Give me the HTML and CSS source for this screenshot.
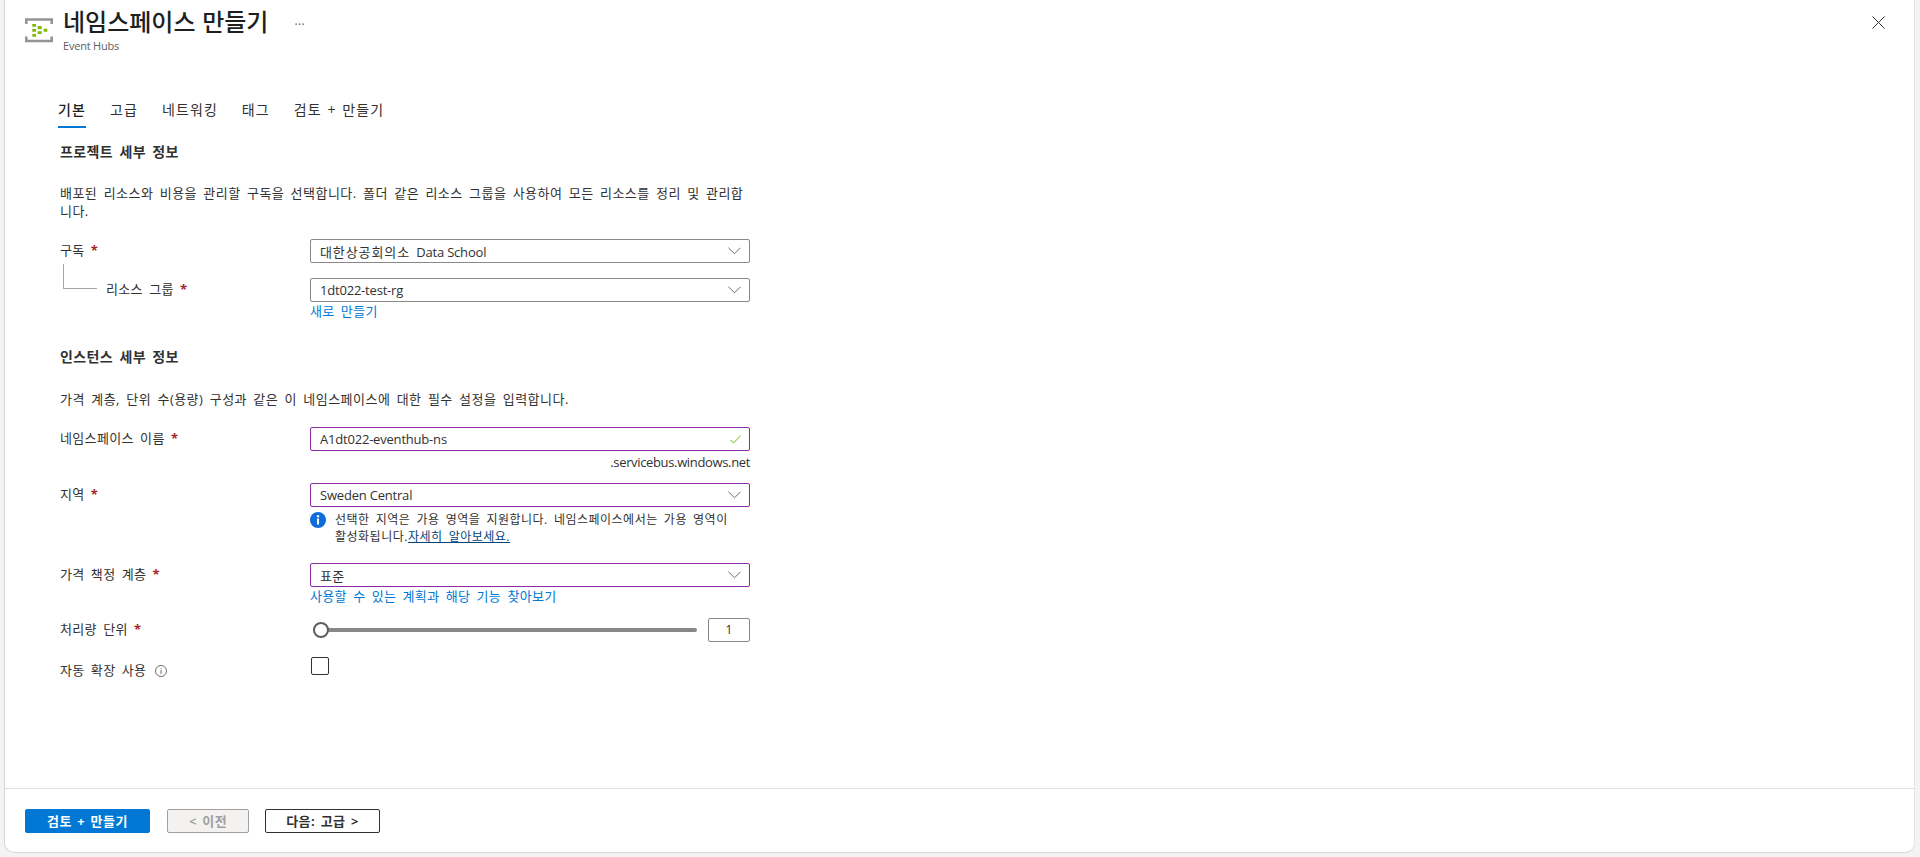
FILE: index.html
```html
<!DOCTYPE html>
<html lang="ko">
<head>
<meta charset="utf-8">
<title>네임스페이스 만들기</title>
<link rel="stylesheet" href="styles.css">
</head>
<body>
<div class="panel">
  <header class="header">
    <svg class="hub-icon" viewBox="0 0 28 25" width="28" height="25">
      <path d="M1.300 6V1.500h25.400V6M1.300 18.500v4.500h25.400v-4.500" fill="none" stroke="#949494" stroke-width="2.600"/>
      <path d="M7.300 6H11v2.700H7.300zM7.300 11H11v2.700H7.300zM7.300 16H11v2.700H7.300zM12.700 8h4v3.300h-4zM12.700 13.300h4V16h-4zM18.700 10.700h3.600v3h-3.600z" fill="#7fba00"/>
    </svg>
    <div class="titles">
      <h1 class="title">네임스페이스 만들기</h1>
      <div class="subtitle latin">Event Hubs</div>
    </div>
    <span class="more">···</span>
    <svg class="close" viewBox="0 0 13 13" width="13" height="13"><path d="M.5.500l12 12M12.500.500l-12 12" stroke="#323130" stroke-width="1" fill="none"/></svg>
  </header>

  <nav class="tabs">
    <span class="tab active">기본</span>
    <span class="tab">고급</span>
    <span class="tab">네트워킹</span>
    <span class="tab">태그</span>
    <span class="tab">검토 + 만들기</span>
  </nav>

  <main class="form">
    <h2 class="section">프로젝트 세부 정보</h2>
    <p class="desc">배포된 리소스와 비용을 관리할 구독을 선택합니다. 폴더 같은 리소스 그룹을 사용하여 모든 리소스를 정리 및 관리합니다.</p>

    <div class="row row-sub">
      <label class="label">구독 <span class="req">*</span></label>
      <div class="control"><div class="select"><span><span class="wide">대한상공회의소</span> <span class="latin">Data School</span></span><svg class="chev" viewBox="0 0 14 8" width="13" height="8"><path d="M.5.500L7 7l6.500-6.500" fill="none" stroke="#605e5c"/></svg></div></div>
    </div>
    <div class="row row-rg">
      <label class="label label-child">리소스 그룹 <span class="req">*</span></label>
      <div class="control">
        <div class="select"><span class="latin">1dt022-test-rg</span><svg class="chev" viewBox="0 0 14 8" width="13" height="8"><path d="M.5.500L7 7l6.500-6.500" fill="none" stroke="#605e5c"/></svg></div>
        <a class="link">새로 만들기</a>
      </div>
    </div>

    <h2 class="section section-2">인스턴스 세부 정보</h2>
    <p class="desc desc-2">가격 계층, 단위 수(용량) 구성과 같은 이 네임스페이스에 대한 필수 설정을 입력합니다.</p>

    <div class="row row-ns">
      <label class="label">네임스페이스 이름 <span class="req">*</span></label>
      <div class="control">
        <div class="select dirty"><span class="latin">A1dt022-eventhub-ns</span><svg class="check" viewBox="0 0 14 11" width="11" height="9"><path d="M.5 6l4 4L13.500.500" fill="none" stroke="#6bb700" stroke-width="1.200"/></svg></div>
        <div class="suffix latin">.servicebus.windows.net</div>
      </div>
    </div>
    <div class="row row-region">
      <label class="label">지역 <span class="req">*</span></label>
      <div class="control">
        <div class="select dirty"><span class="latin">Sweden Central</span><svg class="chev" viewBox="0 0 14 8" width="13" height="8"><path d="M.5.500L7 7l6.500-6.500" fill="none" stroke="#605e5c"/></svg></div>
        <div class="info">
          <svg class="info-icon" viewBox="0 0 16 16" width="16" height="16"><circle cx="8" cy="8" r="8" fill="#0f6cdb"/><rect x="7" y="6.500" width="2" height="6" fill="#fff"/><circle cx="8" cy="4.300" r="1.200" fill="#fff"/></svg>
          <p class="info-text">선택한 지역은 가용 영역을 지원합니다. 네임스페이스에서는 가용 영역이 활성화됩니다.<a class="learn">자세히 알아보세요.</a></p>
        </div>
      </div>
    </div>
    <div class="row row-tier">
      <label class="label">가격 책정 계층 <span class="req">*</span></label>
      <div class="control">
        <div class="select dirty"><span>표준</span><svg class="chev" viewBox="0 0 14 8" width="13" height="8"><path d="M.5.500L7 7l6.500-6.500" fill="none" stroke="#605e5c"/></svg></div>
        <a class="link">사용할 수 있는 계획과 해당 기능 찾아보기</a>
      </div>
    </div>
    <div class="row row-tu">
      <label class="label">처리량 단위 <span class="req">*</span></label>
      <div class="control slider-row">
        <div class="slider"><span class="knob"></span></div>
        <div class="number">1</div>
      </div>
    </div>
    <div class="row row-auto">
      <label class="label">자동 확장 사용 <svg class="tip" viewBox="0 0 12 12" width="12" height="12"><circle cx="6" cy="6" r="5.500" fill="none" stroke="#6e6e6e"/><rect x="5.500" y="5" width="1" height="4" fill="#6e6e6e"/><rect x="5.500" y="3" width="1" height="1" fill="#6e6e6e"/></svg></label>
      <div class="control"><span class="checkbox"></span></div>
    </div>
  </main>

  <footer class="footer">
    <button class="btn primary">검토 + 만들기</button>
    <button class="btn disabled">&lt; 이전</button>
    <button class="btn secondary">다음: 고급 &gt;</button>
  </footer>
</div>
</body>
</html>
```
FILE: styles.css
```css
* { box-sizing: border-box; }
html, body { margin: 0; height: 100%; }
body {
  background: #f3f3f3;
  font-family: "Open Sans", "Noto Sans CJK KR", sans-serif;
  font-size: 13px;
  letter-spacing: 0.35px;
  word-spacing: 2.5px;
  color: #323130;
  overflow: hidden;
}
.latin { letter-spacing: -0.2px; word-spacing: 0; }
.wide { letter-spacing: 0.9px; }
.panel {
  margin-left: 4px;
  width: 1911px;
  height: 853px;
  background: #fff;
  border-left: 1px solid #d6d6d6;
  border-bottom: 1px solid #d6d6d6;
  border-right: 1px solid #e4e4e4;
  border-radius: 0 0 10px 10px;
  display: flex;
  flex-direction: column;
}
.header {
  display: flex;
  align-items: flex-start;
  height: 56px;
  padding: 5px 0 0 20px;
}
.hub-icon { margin-top: 13px; flex: none; }
.titles { margin-left: 10px; }
.title {
  margin: 0;
  font-size: 24px;
  line-height: 32px;
  font-weight: 500;
  letter-spacing: 0;
  word-spacing: 0;
  color: #201f1e;
  font-family: "Noto Sans CJK KR", sans-serif;
}
.subtitle {
  font-size: 11px;
  line-height: 16px;
  margin-top: 1px;
  color: #605e5c;
}
.more { margin: 12px 0 0 26px; font-size: 12px; line-height: 16px; color: #605e5c; }
.close { margin: 11px 29px 0 auto; }
.tabs {
  display: flex;
  gap: 24px;
  padding: 39px 0 0 53px;
  height: 72px;
}
.tab {
  font-size: 14px;
  line-height: 20px;
  height: 33px;
  padding-top: 5px;
  letter-spacing: 1.1px;
  word-spacing: 1px;
  color: #323130;
}
.tab.active { border-bottom: 2px solid #0078d4; font-weight: 500; color: #201f1e; }
.form { flex: 1; padding-left: 55px; width: 800px; }
.section {
  margin: 0;
  font-size: 14px;
  line-height: 20px;
  font-weight: 700;
  color: #323130;
  padding-top: 14px;
}
.desc {
  margin: 22px 0 0;
  width: 686px;
  line-height: 18px;
  letter-spacing: 0.47px;
}
.row { display: grid; grid-template-columns: 250px 440px; }
.label { line-height: 20px; position: relative; padding-top: 1px; }
.req { color: #a4262c; font-weight: 700; }
.row-sub { margin-top: 19px; }
.row-rg { margin-top: 15px; }
.row-rg .label { padding-left: 46px; }
.label-child::before {
  content: "";
  position: absolute;
  left: 3px;
  top: -14px;
  width: 33px;
  height: 24px;
  border-left: 1px solid #a6a6a6;
  border-bottom: 1px solid #a6a6a6;
}
.control { min-width: 0; }
.select {
  display: flex;
  align-items: center;
  justify-content: space-between;
  height: 24px;
  border: 1px solid #8a8886;
  border-radius: 2px;
  padding: 0 8px 0 9px;
  background: #fff;
}
.select.dirty { border-color: #8a2da5; }
.chev { flex: none; }
.check { flex: none; }
.link { display: block; color: #0078d4; line-height: 18px; }
.section-2 { padding-top: 27px; }
.desc-2 { margin-top: 23px; }
.row-ns { margin-top: 19px; }
.suffix { text-align: right; line-height: 20px; font-size: 13px; margin-top: 1px; letter-spacing: -0.35px; }
.row-region { margin-top: 11px; }
.info { display: flex; gap: 9px; margin-top: 4px; }
.info-icon { flex: none; margin-top: 1px; }
.info-text { margin: 0; width: 400px; line-height: 17px; font-size: 12px; letter-spacing: 0.5px; }
.learn { color: #004578; text-decoration: underline; }
.row-tier { margin-top: 18px; }
.row-tu { margin-top: 13px; }
.slider-row { display: flex; align-items: center; justify-content: space-between; height: 24px; }
.slider {
  margin-left: 3px;
  width: 384px;
  height: 4px;
  background: #8a8886;
  border-radius: 2px;
  position: relative;
}
.knob {
  position: absolute;
  left: 0;
  top: -6px;
  width: 16px;
  height: 16px;
  border-radius: 50%;
  background: #fff;
  border: 2px solid #605e5c;
}
.number {
  width: 42px;
  height: 24px;
  border: 1px solid #8a8886;
  border-radius: 2px;
  text-align: center;
  font-size: 12px;
  line-height: 22px;
}
.row-auto { margin-top: 15px; }
.row-auto .label { padding-top: 3px; }
.tip { margin-left: 2px; vertical-align: -2px; }
.checkbox {
  display: block;
  width: 18px;
  height: 18px;
  margin-left: 1px;
  border: 1px solid #323130;
  border-radius: 2px;
}
.footer {
  height: 64px;
  border-top: 1px solid #e0e0e0;
  display: flex;
  gap: 16px;
  padding: 20px 0 0 20px;
  align-items: flex-start;
}
.btn {
  height: 24px;
  font-family: inherit;
  font-size: 13px;
  font-weight: 700;
  letter-spacing: 0.5px;
  word-spacing: 1.5px;
  line-height: 20px;
  border-radius: 2px;
  padding: 0;
  border: 1px solid;
}
.primary { width: 125px; background: #0078d4; border-color: #0078d4; color: #fff; }
.disabled { width: 82px; margin-left: 1px; background: #f3f2f1; border-color: #a19f9d; color: #a19f9d; }
.secondary { width: 115px; background: #fff; border-color: #323130; color: #323130; }
```
